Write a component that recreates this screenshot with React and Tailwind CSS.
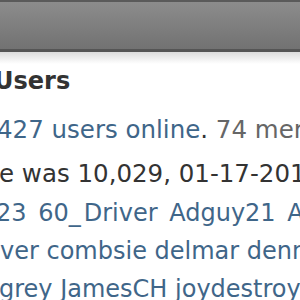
export default function App() {
  return (
    <div className="w-[300px] h-[300px] overflow-hidden bg-white font-['DejaVu_Sans',sans-serif]">
      {/* header bar */}
      <div className="h-[52px] border-t-2 border-b-[3px] border-t-[#5a5a5a] border-b-[#555] bg-gradient-to-b from-[#8c8c8c] to-[#727272]" />
      <div className="h-[12px] bg-gradient-to-b from-[#dcdcdc] to-white" />

      <div className="whitespace-nowrap">
        <div className="-ml-[6px] mt-[2px] text-[24px] leading-[30px] font-bold text-[#333]">Users</div>
        <div className="-ml-[3px] mt-[19px] text-[24.5px] leading-[30px] text-[#666]">
          <span className="text-[#3f6689]">427 users online</span>
          <span className="text-[#333]">.</span> 74 members
        </div>
        <div className="-ml-[1px] mt-[14px] text-[24.5px] leading-[30px] text-[#333]">e was 10,029, 01-17-2015</div>
        <div className="mt-[5px] text-[24px] leading-[38px] text-[#3f6689]">
          <div className="-ml-[4px] [word-spacing:4px]">
            23 60<span className="tracking-[3px]">_</span>Driver Adguy21 Alex
          </div>
          <div>ver combsie delmar dennis</div>
          <div className="-ml-[1px]">grey JamesCH joydestroyer</div>
        </div>
      </div>
    </div>
  );
}
